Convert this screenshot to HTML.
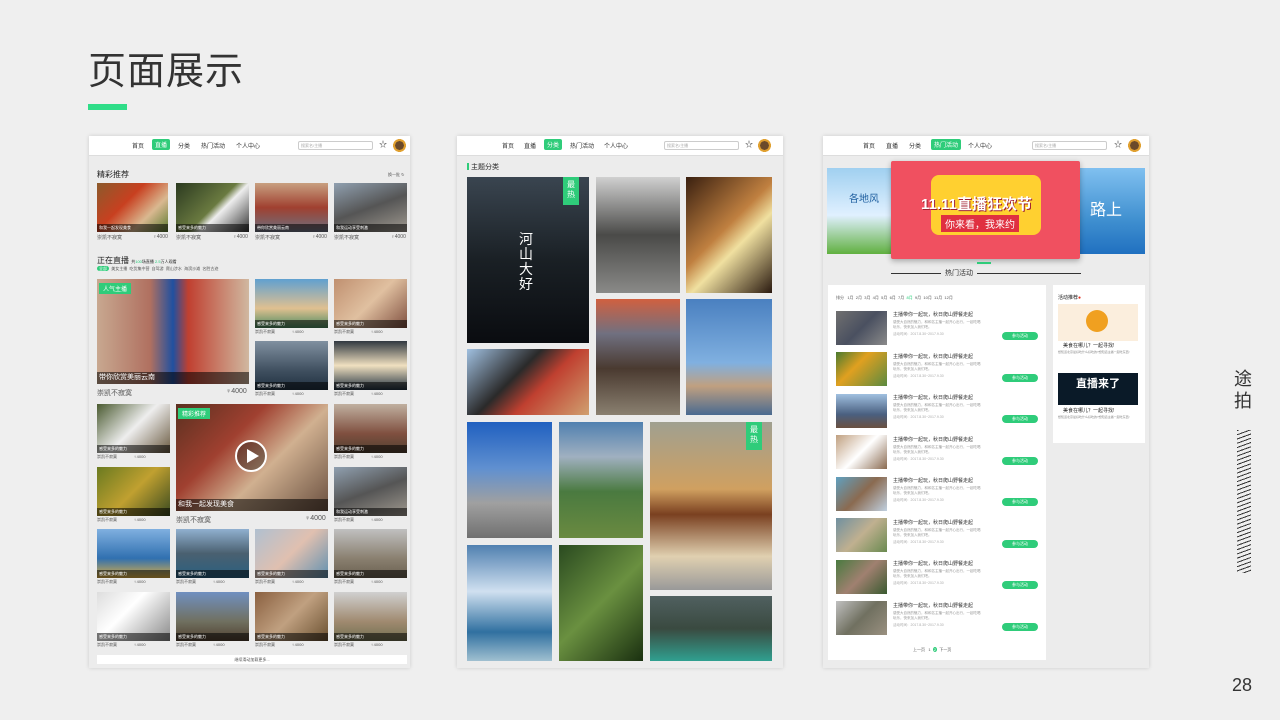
<!DOCTYPE html>
<html><head><meta charset="utf-8">
<style>
*{margin:0;padding:0;box-sizing:border-box}
body{width:1280px;height:720px;background:#efefef;position:relative;overflow:hidden;font-family:"Liberation Sans","Noto Sans CJK SC",sans-serif;color:#333}
.a{position:absolute}
.scr{position:absolute;top:136px;height:532px;background:#ececec;box-shadow:0 0 4px rgba(0,0,0,.15);overflow:hidden}
.nav{position:absolute;left:0;top:0;right:0;height:20px;background:#fff;border-bottom:1px solid #ddd;font-size:6px}
.nav span{position:absolute;top:5px}
.nav .on{background:#2fcc7a;color:#fff;padding:1px 3px;top:3px;border-radius:2px}
.srch{position:absolute;top:5px;height:9px;border:1px solid #ccc;border-radius:2px;font-size:4px;color:#aaa;padding-left:2px;line-height:7px}
.av{position:absolute;top:2px;width:15px;height:15px;border-radius:50%;background:radial-gradient(circle,#6b4a2a 40%,#e0a030 42%,#e0a030 60%,#fff 62%)}
.im{position:absolute}
.cap{position:absolute;left:0;right:0;bottom:0;height:8px;background:rgba(0,0,0,.55);color:#fff;font-size:4px;line-height:8px;padding-left:2px}
.t{position:absolute;font-size:5px;color:#555}
.g{background:#2fcc7a;color:#fff}
</style></head><body>
<div class="a" style="left:88px;top:40px;font-size:38px;color:#333;letter-spacing:1px">页面展示</div>
<div class="a" style="left:88px;top:104px;width:39px;height:6px;background:#2fdd88"></div>
<div class="a" style="left:1234px;top:368px;font-size:18px;line-height:22px;width:20px">途<br>拍</div>
<div class="a" style="left:1237px;top:430px;width:14px;height:143px;background:repeating-linear-gradient(160deg,#333 0 1px,transparent 1px 4px)"></div>
<div class="a" style="left:1232px;top:675px;font-size:18px">28</div>

<!-- screen 1 -->
<div class="scr" style="left:89px;width:321px">
 <div class="nav"><span style="left:43px">首页</span><span class="on" style="left:63px">直播</span><span style="left:89px">分类</span><span style="left:112px">热门活动</span><span style="left:147px">个人中心</span><div class="srch" style="left:209px;width:75px">搜索名/主播</div><span style="left:290px;font-size:8px;top:3px">☆</span><div class="av" style="left:303px"></div></div>
 <div class="t" style="left:8px;top:33px;font-size:8px;color:#222">精彩推荐</div><div class="t" style="left:299px;top:36px;font-size:4px">换一批 ↻</div>
 <div class="im" style="left:8px;top:47px;width:71px;height:49px;background:linear-gradient(135deg,#8b5a2b,#c84020 40%,#d9b890 70%,#5a7a30)"><div class="cap">和我一起发现美食</div></div>
 <div class="im" style="left:87px;top:47px;width:73px;height:49px;background:linear-gradient(135deg,#2b3a20,#6a7a40 50%,#eee 60%,#333)"><div class="cap">感受来多的魅力</div></div>
 <div class="im" style="left:166px;top:47px;width:73px;height:49px;background:linear-gradient(180deg,#c8a080,#a04030 50%,#6a7080)"><div class="cap">带你欣赏美丽云南</div></div>
 <div class="im" style="left:245px;top:47px;width:73px;height:49px;background:linear-gradient(160deg,#90a0b0,#555 50%,#a09a90)"><div class="cap">和我运动享受刺激</div></div>
 <div class="t" style="left:8px;top:98px">崇凯不寂寞</div><div class="t" style="left:64px;top:98px">♀4000</div>
 <div class="t" style="left:87px;top:98px">崇凯不寂寞</div><div class="t" style="left:144px;top:98px">♀4000</div>
 <div class="t" style="left:166px;top:98px">崇凯不寂寞</div><div class="t" style="left:223px;top:98px">♀4000</div>
 <div class="t" style="left:245px;top:98px">崇凯不寂寞</div><div class="t" style="left:302px;top:98px">♀4000</div>
 <div class="t" style="left:8px;top:119px;font-size:8px;color:#222">正在直播 <span style="font-size:4px">共<span style="color:#2c7">100</span>场直播 <span style="color:#2c7">2.5</span>万人观看</span></div>
 <div class="t" style="left:8px;top:130px;font-size:4px"><span class="g" style="padding:0 2px;border-radius:3px">全部</span>&nbsp; 美女主播 &nbsp;吃货集中营 &nbsp;自驾游 &nbsp;爬山涉水 &nbsp;海滨沙滩 &nbsp;名胜古迹</div>
 <div class="im" style="left:8px;top:143px;width:152px;height:105px;background:linear-gradient(90deg,#c8a890,#b07060 35%,#2050a0 50%,#c04030 60%,#d0b8a0)"><div class="g" style="position:absolute;left:2px;top:4px;font-size:6px;padding:1px 4px">人气主播</div><div class="cap" style="height:12px;font-size:7px;line-height:12px">带你欣赏美丽云南</div></div>
 <div class="t" style="left:8px;top:252px;font-size:7px">崇凯不寂寞</div><div class="t" style="left:137px;top:252px;font-size:7px">♀4000</div>
 <div class="im" style="left:166px;top:143px;width:73px;height:49px;background:linear-gradient(180deg,#60a0d0,#e0c090 60%,#4a8a60)"><div class="cap">感受来多的魅力</div></div>
 <div class="im" style="left:245px;top:143px;width:73px;height:49px;background:linear-gradient(135deg,#c09070,#e0c0a0 50%,#805040)"><div class="cap">感受来多的魅力</div></div>
 <div class="t" style="left:166px;top:193px;font-size:4px">崇凯不寂寞 &nbsp;&nbsp;&nbsp;&nbsp;&nbsp;&nbsp;&nbsp;&nbsp;&nbsp;&nbsp;&nbsp;&nbsp;&nbsp;&nbsp;♀4000</div>
 <div class="t" style="left:245px;top:193px;font-size:4px">崇凯不寂寞 &nbsp;&nbsp;&nbsp;&nbsp;&nbsp;&nbsp;&nbsp;&nbsp;&nbsp;&nbsp;&nbsp;&nbsp;&nbsp;&nbsp;♀4000</div>
 <div class="im" style="left:166px;top:205px;width:73px;height:49px;background:linear-gradient(180deg,#8090a0,#405060 60%,#203040)"><div class="cap">感受来多的魅力</div></div>
 <div class="im" style="left:245px;top:205px;width:73px;height:49px;background:linear-gradient(180deg,#303840,#f0e0c0 50%,#203040)"><div class="cap">感受来多的魅力</div></div>
 <div class="t" style="left:166px;top:255px;font-size:4px">崇凯不寂寞 &nbsp;&nbsp;&nbsp;&nbsp;&nbsp;&nbsp;&nbsp;&nbsp;&nbsp;&nbsp;&nbsp;&nbsp;&nbsp;&nbsp;♀4000</div>
 <div class="t" style="left:245px;top:255px;font-size:4px">崇凯不寂寞 &nbsp;&nbsp;&nbsp;&nbsp;&nbsp;&nbsp;&nbsp;&nbsp;&nbsp;&nbsp;&nbsp;&nbsp;&nbsp;&nbsp;♀4000</div>
 <div class="im" style="left:8px;top:268px;width:73px;height:49px;background:linear-gradient(135deg,#4a5a30,#eee 50%,#6a5a40)"><div class="cap">感受来多的魅力</div></div>
 <div class="im" style="left:8px;top:331px;width:73px;height:49px;background:linear-gradient(135deg,#6a7a20,#c0a030 50%,#3a4a20)"><div class="cap">感受来多的魅力</div></div>
 <div class="t" style="left:8px;top:318px;font-size:4px">崇凯不寂寞 &nbsp;&nbsp;&nbsp;&nbsp;&nbsp;&nbsp;&nbsp;&nbsp;&nbsp;&nbsp;&nbsp;&nbsp;&nbsp;&nbsp;♀4000</div>
 <div class="t" style="left:8px;top:381px;font-size:4px">崇凯不寂寞 &nbsp;&nbsp;&nbsp;&nbsp;&nbsp;&nbsp;&nbsp;&nbsp;&nbsp;&nbsp;&nbsp;&nbsp;&nbsp;&nbsp;♀4000</div>
 <div class="im" style="left:87px;top:268px;width:152px;height:107px;background:linear-gradient(135deg,#5a3020,#a04030 35%,#d0b090 60%,#6a5040)"><div class="g" style="position:absolute;left:2px;top:4px;font-size:6px;padding:1px 4px">精彩推荐</div><div style="position:absolute;left:59px;top:36px;width:32px;height:32px;border-radius:50%;border:2px solid #fff;background:rgba(0,0,0,.35)"></div><div style="position:absolute;left:71px;top:45px;border-left:12px solid #fff;border-top:7px solid transparent;border-bottom:7px solid transparent"></div><div class="cap" style="height:12px;font-size:7px;line-height:12px">和我一起发现美食</div></div>
 <div class="t" style="left:87px;top:379px;font-size:7px">崇凯不寂寞</div><div class="t" style="left:216px;top:379px;font-size:7px">♀4000</div>
 <div class="im" style="left:245px;top:268px;width:73px;height:49px;background:linear-gradient(180deg,#c0b0a0,#805040 60%,#504030)"><div class="cap">感受来多的魅力</div></div>
 <div class="im" style="left:245px;top:331px;width:73px;height:49px;background:linear-gradient(160deg,#90a0b0,#555 50%,#a09a90)"><div class="cap">和我运动享受刺激</div></div>
 <div class="t" style="left:245px;top:318px;font-size:4px">崇凯不寂寞 &nbsp;&nbsp;&nbsp;&nbsp;&nbsp;&nbsp;&nbsp;&nbsp;&nbsp;&nbsp;&nbsp;&nbsp;&nbsp;&nbsp;♀4000</div>
 <div class="t" style="left:245px;top:381px;font-size:4px">崇凯不寂寞 &nbsp;&nbsp;&nbsp;&nbsp;&nbsp;&nbsp;&nbsp;&nbsp;&nbsp;&nbsp;&nbsp;&nbsp;&nbsp;&nbsp;♀4000</div>
 <div class="im" style="left:8px;top:393px;width:73px;height:49px;background:linear-gradient(180deg,#80b0e0,#3070b0 60%,#e0b040)"><div class="cap">感受来多的魅力</div></div>
 <div class="im" style="left:87px;top:393px;width:73px;height:49px;background:linear-gradient(180deg,#90b0d0,#4a6070 50%,#2a6080)"><div class="cap">感受来多的魅力</div></div>
 <div class="im" style="left:166px;top:393px;width:73px;height:49px;background:linear-gradient(135deg,#b0c0d0,#e0c0b0 50%,#6090b0)"><div class="cap">感受来多的魅力</div></div>
 <div class="im" style="left:245px;top:393px;width:73px;height:49px;background:linear-gradient(180deg,#c0c0c0,#8a8070 60%,#6a6050)"><div class="cap">感受来多的魅力</div></div>
 <div class="im" style="left:8px;top:456px;width:73px;height:49px;background:linear-gradient(135deg,#ddd,#fff 40%,#8a8a8a)"><div class="cap">感受来多的魅力</div></div>
 <div class="im" style="left:87px;top:456px;width:73px;height:49px;background:linear-gradient(180deg,#7090c0,#707060 60%,#504030)"><div class="cap">感受来多的魅力</div></div>
 <div class="im" style="left:166px;top:456px;width:73px;height:49px;background:linear-gradient(135deg,#8a6040,#c0a080 50%,#6a5030)"><div class="cap">感受来多的魅力</div></div>
 <div class="im" style="left:245px;top:456px;width:73px;height:49px;background:linear-gradient(180deg,#d0d0d0,#a08a70 60%,#707050)"><div class="cap">感受来多的魅力</div></div>
 <div class="t" style="left:8px;top:443px;font-size:4px">崇凯不寂寞 &nbsp;&nbsp;&nbsp;&nbsp;&nbsp;&nbsp;&nbsp;&nbsp;&nbsp;&nbsp;&nbsp;&nbsp;&nbsp;&nbsp;♀4000</div>
 <div class="t" style="left:87px;top:443px;font-size:4px">崇凯不寂寞 &nbsp;&nbsp;&nbsp;&nbsp;&nbsp;&nbsp;&nbsp;&nbsp;&nbsp;&nbsp;&nbsp;&nbsp;&nbsp;&nbsp;♀4000</div>
 <div class="t" style="left:166px;top:443px;font-size:4px">崇凯不寂寞 &nbsp;&nbsp;&nbsp;&nbsp;&nbsp;&nbsp;&nbsp;&nbsp;&nbsp;&nbsp;&nbsp;&nbsp;&nbsp;&nbsp;♀4000</div>
 <div class="t" style="left:245px;top:443px;font-size:4px">崇凯不寂寞 &nbsp;&nbsp;&nbsp;&nbsp;&nbsp;&nbsp;&nbsp;&nbsp;&nbsp;&nbsp;&nbsp;&nbsp;&nbsp;&nbsp;♀4000</div>
 <div class="t" style="left:8px;top:506px;font-size:4px">崇凯不寂寞 &nbsp;&nbsp;&nbsp;&nbsp;&nbsp;&nbsp;&nbsp;&nbsp;&nbsp;&nbsp;&nbsp;&nbsp;&nbsp;&nbsp;♀4000</div>
 <div class="t" style="left:87px;top:506px;font-size:4px">崇凯不寂寞 &nbsp;&nbsp;&nbsp;&nbsp;&nbsp;&nbsp;&nbsp;&nbsp;&nbsp;&nbsp;&nbsp;&nbsp;&nbsp;&nbsp;♀4000</div>
 <div class="t" style="left:166px;top:506px;font-size:4px">崇凯不寂寞 &nbsp;&nbsp;&nbsp;&nbsp;&nbsp;&nbsp;&nbsp;&nbsp;&nbsp;&nbsp;&nbsp;&nbsp;&nbsp;&nbsp;♀4000</div>
 <div class="t" style="left:245px;top:506px;font-size:4px">崇凯不寂寞 &nbsp;&nbsp;&nbsp;&nbsp;&nbsp;&nbsp;&nbsp;&nbsp;&nbsp;&nbsp;&nbsp;&nbsp;&nbsp;&nbsp;♀4000</div>
 <div class="a" style="left:8px;top:519px;width:310px;height:9px;background:#fff;font-size:4px;text-align:center;line-height:9px;color:#555">继续滑动加载更多...</div>
</div>

<!-- screen 2 -->
<div class="scr" style="left:457px;width:326px">
 <div class="nav"><span style="left:45px">首页</span><span style="left:67px">直播</span><span class="on" style="left:87px">分类</span><span style="left:113px">热门活动</span><span style="left:147px">个人中心</span><div class="srch" style="left:207px;width:75px">搜索名/主播</div><span style="left:288px;font-size:8px;top:3px">☆</span><div class="av" style="left:300px"></div></div>
 <div class="a" style="left:10px;top:27px;width:2px;height:7px;background:#2fcc7a"></div>
 <div class="t" style="left:14px;top:26px;font-size:7px;color:#222">主题分类</div>
 <div class="im" style="left:10px;top:41px;width:122px;height:166px;background:linear-gradient(180deg,#3a4550,#1a2025 50%,#0a0c10)"><div class="g" style="position:absolute;right:10px;top:0;width:16px;height:28px;font-size:8px;text-align:center;line-height:10px;padding-top:3px">最<br>热</div><div style="position:absolute;left:52px;top:55px;color:#fff;font-size:14px;line-height:15px;width:16px">河山大好</div></div>
 <div class="im" style="left:10px;top:213px;width:122px;height:66px;background:linear-gradient(135deg,#a0c0e0,#2a2a2a 40%,#c04030 60%,#d0a070)"></div>
 <div class="im" style="left:139px;top:41px;width:84px;height:116px;background:linear-gradient(180deg,#d0d0d0,#4a4a48 50%,#8a8a88)"></div>
 <div class="im" style="left:229px;top:41px;width:86px;height:116px;background:linear-gradient(135deg,#3a2010,#c08040 45%,#f0e0a0 60%,#2a1a10)"></div>
 <div class="im" style="left:139px;top:163px;width:84px;height:116px;background:linear-gradient(180deg,#d06040,#707080 30%,#4a3a30 60%,#8a8070)"></div>
 <div class="im" style="left:229px;top:163px;width:86px;height:116px;background:linear-gradient(180deg,#4a80c0,#80b0e0 55%,#c0a080 75%,#4a6a90)"></div>
 <div class="im" style="left:10px;top:286px;width:85px;height:116px;background:linear-gradient(180deg,#2060c0,#6090d0 40%,#a0a0a0 70%,#707070)"></div>
 <div class="im" style="left:102px;top:286px;width:84px;height:116px;background:linear-gradient(180deg,#5080b0,#a0b0c0 30%,#4a7a40 60%,#6a8a40)"></div>
 <div class="im" style="left:193px;top:286px;width:122px;height:168px;background:linear-gradient(180deg,#a0a090,#d0a060 40%,#7a4020 55%,#e0d0b0 80%,#999)"><div class="g" style="position:absolute;right:10px;top:0;width:16px;height:28px;font-size:8px;text-align:center;line-height:10px;padding-top:3px">最<br>热</div></div>
 <div class="im" style="left:10px;top:409px;width:85px;height:116px;background:linear-gradient(180deg,#5080b0,#d0e0f0 40%,#3070a0 75%,#a0c0d0)"></div>
 <div class="im" style="left:102px;top:409px;width:84px;height:116px;background:linear-gradient(135deg,#2a4a20,#6a9040 50%,#1a3010)"></div>
 <div class="im" style="left:193px;top:460px;width:122px;height:65px;background:linear-gradient(180deg,#506060,#3a4a40 50%,#30a090)"></div>
</div>

<!-- screen 3 -->
<div class="scr" style="left:823px;width:326px">
 <div class="nav"><span style="left:40px">首页</span><span style="left:63px">直播</span><span style="left:86px">分类</span><span class="on" style="left:108px">热门活动</span><span style="left:145px">个人中心</span><div class="srch" style="left:209px;width:75px">搜索名/主播</div><span style="left:291px;font-size:8px;top:3px">☆</span><div class="av" style="left:304px"></div></div>
 <div class="im" style="left:4px;top:32px;width:70px;height:86px;background:linear-gradient(180deg,#a0d0f0,#e0f0ff 55%,#60b040)"><div style="position:absolute;left:22px;top:22px;font-size:10px;color:#2060a0">各地风</div></div>
 <div class="im" style="left:257px;top:32px;width:65px;height:86px;background:linear-gradient(180deg,#80c0f0,#4090d0 60%,#2070c0)"><div style="position:absolute;left:10px;top:28px;font-size:16px;color:#fff">路上</div></div>
 <div class="im" style="left:68px;top:25px;width:189px;height:98px;background:#f05060;border-radius:2px;box-shadow:0 2px 6px rgba(0,0,0,.3)"><div style="position:absolute;left:40px;top:14px;width:110px;height:60px;background:#ffd030;border-radius:8px"></div><div style="position:absolute;left:30px;top:32px;font-size:15px;color:#fff;font-weight:bold;text-shadow:1px 1px 0 #a02030">11.11直播狂欢节</div><div style="position:absolute;left:50px;top:54px;font-size:10px;color:#fff;background:#e03040;padding:1px 4px">你来看，我来约</div></div>
 <div class="a" style="left:154px;top:126px;width:14px;height:2px;background:#2fcc7a"></div>
 <div class="a" style="left:68px;top:137px;width:190px;height:1px;background:#333"></div>
 <div class="a" style="left:118px;top:132px;padding:0 4px;background:#ececec;font-size:7px">热门活动</div>
 <div class="a" style="left:5px;top:149px;width:218px;height:375px;background:#fff">
  <div class="t" style="left:8px;top:10px;font-size:4px">排分 &nbsp; 1月 &nbsp;2月 &nbsp;3月 &nbsp;4月 &nbsp;5月 &nbsp;6月 &nbsp;7月 &nbsp;<span style="color:#2c7">8月</span> &nbsp;9月 &nbsp;10月 &nbsp;11月 &nbsp;12月</div>
 </div>
 <div class="a" style="left:230px;top:149px;width:92px;height:158px;background:#fff">
  <div class="t" style="left:5px;top:9px;font-size:5px;color:#222">活动推荐<span style="color:#e03020">●</span></div>
  <div style="position:absolute;left:5px;top:19px;width:80px;height:37px;background:#fbeedd"><div style="position:absolute;left:28px;top:6px;width:22px;height:22px;border-radius:50%;background:#f0a020"></div></div>
  <div class="t" style="left:10px;top:57px;font-size:5px;color:#222">美食在哪儿？一起寻找!</div>
  <div class="t" style="left:5px;top:65px;font-size:3px;color:#888;width:80px">想知道北京最好吃什么好吃的?想知道主播一起吃东西!</div>
  <div style="position:absolute;left:5px;top:88px;width:80px;height:32px;background:#0a1a28;color:#fff;font-size:11px;font-weight:bold;text-align:center;line-height:22px">直播来了</div>
  <div class="t" style="left:10px;top:122px;font-size:5px;color:#222">美食在哪儿？一起寻找!</div>
  <div class="t" style="left:5px;top:130px;font-size:3px;color:#888;width:80px">想知道北京最好吃什么好吃的?想知道主播一起吃东西!</div>
 </div>
 <!-- list items -->
 <div class="a" style="left:13px;top:175px;width:200px;height:340px">
  <div style="position:absolute;left:0;top:0;width:51px;height:34px;background:linear-gradient(135deg,#707070,#4a5060 50%,#8a8a8a)"></div>
  <div style="position:absolute;left:0;top:41px;width:51px;height:34px;background:linear-gradient(135deg,#4a7a30,#e0a020 40%,#5a8a40)"></div>
  <div style="position:absolute;left:0;top:83px;width:51px;height:34px;background:linear-gradient(180deg,#a0c0e0,#4a6080 60%,#6a5040)"></div>
  <div style="position:absolute;left:0;top:124px;width:51px;height:34px;background:linear-gradient(135deg,#c0a080,#fff 50%,#8a6a50)"></div>
  <div style="position:absolute;left:0;top:166px;width:51px;height:34px;background:linear-gradient(135deg,#60a0c0,#8a6a50 50%,#c0d0e0)"></div>
  <div style="position:absolute;left:0;top:207px;width:51px;height:34px;background:linear-gradient(135deg,#7090a0,#c0b090 50%,#6a8a50)"></div>
  <div style="position:absolute;left:0;top:249px;width:51px;height:34px;background:linear-gradient(135deg,#4a7a40,#a08070 50%,#3a5a30)"></div>
  <div style="position:absolute;left:0;top:290px;width:51px;height:34px;background:linear-gradient(135deg,#c0c0c0,#707060 50%,#9a9080)"></div>
 </div>
 <div class="a" style="left:70px;top:175px;width:145px;font-size:5px;color:#333">
  <div style="height:41.5px;position:relative">主播带你一起玩，秋日爬山野餐走起<div style="font-size:3.5px;color:#999;margin-top:2px">感受大自然的魅力，和和名主播一起开心出行，一起吃喝<br>玩乐，快来加入我们吧。</div><div style="font-size:3.5px;color:#aaa;margin-top:2px">活动时间：2017.8.30~2017.9.30</div><div class="g" style="position:absolute;right:0;top:21px;width:36px;height:8px;border-radius:4px;font-size:4px;text-align:center;line-height:8px">参与活动</div></div>
  <div style="height:41.5px;position:relative">主播带你一起玩，秋日爬山野餐走起<div style="font-size:3.5px;color:#999;margin-top:2px">感受大自然的魅力，和和名主播一起开心出行，一起吃喝<br>玩乐，快来加入我们吧。</div><div style="font-size:3.5px;color:#aaa;margin-top:2px">活动时间：2017.8.30~2017.9.30</div><div class="g" style="position:absolute;right:0;top:21px;width:36px;height:8px;border-radius:4px;font-size:4px;text-align:center;line-height:8px">参与活动</div></div>
  <div style="height:41.5px;position:relative">主播带你一起玩，秋日爬山野餐走起<div style="font-size:3.5px;color:#999;margin-top:2px">感受大自然的魅力，和和名主播一起开心出行，一起吃喝<br>玩乐，快来加入我们吧。</div><div style="font-size:3.5px;color:#aaa;margin-top:2px">活动时间：2017.8.30~2017.9.30</div><div class="g" style="position:absolute;right:0;top:21px;width:36px;height:8px;border-radius:4px;font-size:4px;text-align:center;line-height:8px">参与活动</div></div>
  <div style="height:41.5px;position:relative">主播带你一起玩，秋日爬山野餐走起<div style="font-size:3.5px;color:#999;margin-top:2px">感受大自然的魅力，和和名主播一起开心出行，一起吃喝<br>玩乐，快来加入我们吧。</div><div style="font-size:3.5px;color:#aaa;margin-top:2px">活动时间：2017.8.30~2017.9.30</div><div class="g" style="position:absolute;right:0;top:21px;width:36px;height:8px;border-radius:4px;font-size:4px;text-align:center;line-height:8px">参与活动</div></div>
  <div style="height:41.5px;position:relative">主播带你一起玩，秋日爬山野餐走起<div style="font-size:3.5px;color:#999;margin-top:2px">感受大自然的魅力，和和名主播一起开心出行，一起吃喝<br>玩乐，快来加入我们吧。</div><div style="font-size:3.5px;color:#aaa;margin-top:2px">活动时间：2017.8.30~2017.9.30</div><div class="g" style="position:absolute;right:0;top:21px;width:36px;height:8px;border-radius:4px;font-size:4px;text-align:center;line-height:8px">参与活动</div></div>
  <div style="height:41.5px;position:relative">主播带你一起玩，秋日爬山野餐走起<div style="font-size:3.5px;color:#999;margin-top:2px">感受大自然的魅力，和和名主播一起开心出行，一起吃喝<br>玩乐，快来加入我们吧。</div><div style="font-size:3.5px;color:#aaa;margin-top:2px">活动时间：2017.8.30~2017.9.30</div><div class="g" style="position:absolute;right:0;top:21px;width:36px;height:8px;border-radius:4px;font-size:4px;text-align:center;line-height:8px">参与活动</div></div>
  <div style="height:41.5px;position:relative">主播带你一起玩，秋日爬山野餐走起<div style="font-size:3.5px;color:#999;margin-top:2px">感受大自然的魅力，和和名主播一起开心出行，一起吃喝<br>玩乐，快来加入我们吧。</div><div style="font-size:3.5px;color:#aaa;margin-top:2px">活动时间：2017.8.30~2017.9.30</div><div class="g" style="position:absolute;right:0;top:21px;width:36px;height:8px;border-radius:4px;font-size:4px;text-align:center;line-height:8px">参与活动</div></div>
  <div style="height:41.5px;position:relative">主播带你一起玩，秋日爬山野餐走起<div style="font-size:3.5px;color:#999;margin-top:2px">感受大自然的魅力，和和名主播一起开心出行，一起吃喝<br>玩乐，快来加入我们吧。</div><div style="font-size:3.5px;color:#aaa;margin-top:2px">活动时间：2017.8.30~2017.9.30</div><div class="g" style="position:absolute;right:0;top:21px;width:36px;height:8px;border-radius:4px;font-size:4px;text-align:center;line-height:8px">参与活动</div></div>
 </div>
 <div class="t" style="left:90px;top:511px;font-size:4px">上一页 &nbsp;&nbsp;1 &nbsp;<span class="g" style="border-radius:50%;padding:0 1px">2</span>&nbsp; 下一页</div>
</div>
</body></html>
